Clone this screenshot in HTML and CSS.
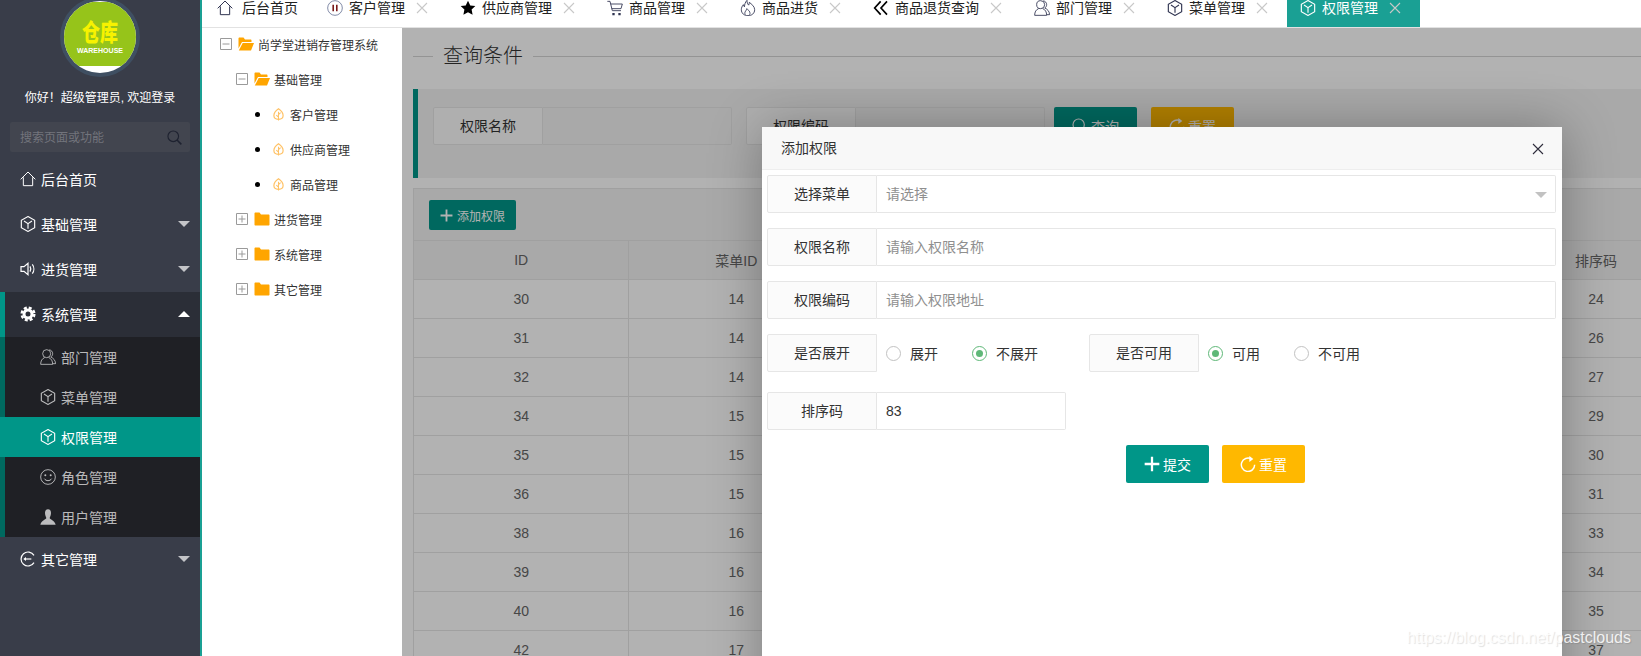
FILE: index.html
```html
<!DOCTYPE html>
<html lang="zh-CN">
<head>
  <meta charset="UTF-8" />
  <meta name="viewport" content="width=device-width, initial-scale=1.0"/>
  <title>权限管理</title>
  <link rel="stylesheet" href="styles.css">
</head>
<body>
  <!-- Icon set -->
  <svg class="sprite" xmlns="http://www.w3.org/2000/svg">
    <symbol id="i-home" viewBox="0 0 24 24"><path d="M1 12.500 12 1.500l11 11M5 9.500V22h14V9.500" fill="none" stroke="currentColor" stroke-width="1.500"/></symbol>
    <symbol id="i-cube" viewBox="0 0 24 24"><path d="M12 .8 22 6.500v11L12 23.200 2 17.500v-11z" fill="none" stroke="currentColor" stroke-width="1.700"/><path d="M6 7.500 12 11.500 18 7.500M12 11.500V19" fill="none" stroke="currentColor" stroke-width="1.700"/></symbol>
    <symbol id="i-pause" viewBox="0 0 24 24"><circle cx="12" cy="12" r="11" fill="none" stroke="#6f7a9a" stroke-width="1.300"/><path d="M9.300 7v10M14.700 7v10" stroke="#7a1a1a" stroke-width="2.400"/></symbol>
    <symbol id="i-star" viewBox="0 0 24 24"><path d="m12 1 3.400 7.200 7.600.9-5.600 5.200 1.500 7.700L12 18.300 5.100 22l1.500-7.700L1 9.100l7.600-.9z" fill="currentColor"/></symbol>
    <symbol id="i-cart" viewBox="0 0 24 24"><path d="M.5 2h4L8 16h13M5.500 6H23l-2 7H7" fill="none" stroke="currentColor" stroke-width="1.300"/><path d="M8 19.500h3.500V23H8zM17 19.500h3.500V23H17z" fill="currentColor"/></symbol>
    <symbol id="i-fire" viewBox="0 0 24 24"><path d="M12 23.500c-5.800 0-10-3.500-10-9 0-3 1.300-5.300 3-7.500.3 1.500.8 2.500 1.700 3.200C6.800 6.500 8 3 10.500.5c-.2 3.500 1 5.500 2.500 7.200.6-1.200 1-2.700 1-4.200 3 2.500 8 6 8 11 0 5.500-4.200 9-10 9z" fill="none" stroke="currentColor" stroke-width="1.300"/><path d="M8 22c-1-1.500-1.200-3.500.5-5.500.8-1 1.500-2.200 1.500-3.500 2 1.500 5.500 4 5 7.500-.2 1-.7 1.700-1.500 2.300" fill="none" stroke="currentColor" stroke-width="1.200"/></symbol>
    <symbol id="i-back" viewBox="0 0 24 24"><path d="M11.500 2 2.500 12l9 10M21 2l-9 10 9 10" fill="none" stroke="currentColor" stroke-width="2.500"/></symbol>
    <symbol id="i-users" viewBox="0 0 24 24"><circle cx="10" cy="7" r="6" fill="none" stroke="currentColor" stroke-width="1.300"/><path d="M7 12.800C3 14.500 1 18 1 23h18c0-5-2-8.500-6-10.200M14 1.200c3 .5 5 3 5 5.800 0 2-1 3.800-2.800 5 3.800 1.700 7.100 5 7.100 10h-4" fill="none" stroke="currentColor" stroke-width="1.300"/></symbol>
    <symbol id="i-sound" viewBox="0 0 24 24"><path d="M1.500 8.500v7h4.500l6 5v-17l-6 5z" fill="none" stroke="currentColor" stroke-width="1.800"/><path d="M15 8c1.500 2.500 1.500 5.500 0 8M18.500 5c3 4 3 10 0 14" fill="none" stroke="currentColor" stroke-width="1.800"/></symbol>
    <symbol id="i-gear" viewBox="0 0 24 24"><circle cx="12" cy="12" r="6" fill="none" stroke="currentColor" stroke-width="4.500"/><circle cx="12" cy="12" r="9.500" fill="none" stroke="currentColor" stroke-width="3.600" stroke-dasharray="4.460 3"/></symbol>
    <symbol id="i-smile" viewBox="0 0 24 24"><circle cx="12" cy="12" r="11" fill="none" stroke="currentColor" stroke-width="1.400"/><circle cx="8" cy="9.500" r="1.500" fill="currentColor"/><circle cx="16" cy="9.500" r="1.500" fill="currentColor"/><path d="M6.500 14.500c2.500 4 8.500 4 11 0" fill="none" stroke="currentColor" stroke-width="1.500"/></symbol>
    <symbol id="i-person" viewBox="0 0 24 24"><path d="M12 .5c3 0 4.500 2.500 4.500 5.500S15 12 14.500 13.500c0 2 7.500 3.500 9 10H.5c1.500-6.500 9-8 9-10C9 12 7.500 9 7.500 6S9 .5 12 .5z" fill="currentColor"/></symbol>
    <symbol id="i-exit" viewBox="0 0 24 24"><path d="M21 6.500a10.500 10.500 0 1 0 0 11" fill="none" stroke="currentColor" stroke-width="1.800"/><path d="M7 12h10" stroke="currentColor" stroke-width="1.800"/><path d="m5 12 4-3v6z" fill="currentColor"/></symbol>
    <symbol id="i-search" viewBox="0 0 24 24"><circle cx="10" cy="10" r="8.500" fill="none" stroke="currentColor" stroke-width="1.800"/><path d="m16 16 7 7" stroke="currentColor" stroke-width="2.400"/></symbol>
    <symbol id="i-plus" viewBox="0 0 24 24"><path d="M12 1v22M1 12h22" stroke="currentColor" stroke-width="3.400"/></symbol>
    <symbol id="i-refresh" viewBox="0 0 24 24"><path d="M17 4.500A10 10 0 1 0 22 13" fill="none" stroke="currentColor" stroke-width="2.200"/><path d="m14 0 6 4.500-6 4.500z" fill="currentColor"/></symbol>
    <symbol id="i-close" viewBox="0 0 12 12"><path d="m1 1 10 10M11 1 1 11" stroke="currentColor" stroke-width="1.100"/></symbol>
    <symbol id="i-leaf" viewBox="0 0 24 24"><path d="M12 1.500C5.500 6 3.500 10 3.500 14c0 4.500 3.500 7 8.500 7s8.500-2.500 8.500-7c0-4-2-8-8.500-12.500z" fill="none" stroke="currentColor" stroke-width="2.200"/><path d="M12 7v16M12 12l4-3.500M12 17l-4-4" fill="none" stroke="currentColor" stroke-width="1.900"/></symbol>
    <symbol id="i-folder" viewBox="0 0 16 14"><path d="M.5 1.500C.5.800 1 .5 1.500.5h4L7 2.500h7.500c.6 0 1 .4 1 1v9c0 .6-.4 1-1 1h-13c-.6 0-1-.4-1-1z" fill="currentColor"/></symbol>
    <symbol id="i-folder-open" viewBox="0 0 16 14"><path d="M.5 1.500C.5.800 1 .5 1.500.5h4L7 2.500h5.500c.6 0 1 .4 1 1V5H4L.5 11.500z" fill="currentColor"/><path d="M4.700 6H16l-3 7.500H.8z" fill="currentColor"/></symbol>
    <symbol id="i-minus-box" viewBox="0 0 12 12"><path d="M.5.500h11v11H.5z" fill="#fff" stroke="#9a9a9a"/><path d="M2.500 6h7" stroke="#9a9a9a"/></symbol>
    <symbol id="i-plus-box" viewBox="0 0 12 12"><path d="M.5.500h11v11H.5z" fill="#fff" stroke="#9a9a9a"/><path d="M2.500 6h7M6 2.500v7" stroke="#9a9a9a"/></symbol>
  </svg>

  <div class="app">
    <!-- Left menu -->
    <aside class="side">
      <svg class="logo" viewBox="0 0 80 80" xmlns="http://www.w3.org/2000/svg" aria-label="仓库">
        <defs><clipPath id="logo-clip"><circle cx="40" cy="40" r="36"/></clipPath></defs>
        <circle cx="40" cy="40" r="40" fill="#3f4f62"/>
        <g clip-path="url(#logo-clip)">
          <rect width="80" height="80" fill="#fff"/>
          <rect y="5" width="80" height="64" fill="#96c41a"/>
        </g>
        <text class="logo-cn" transform="translate(40 44) scale(1 1.3)">仓库</text>
        <text class="logo-en" x="17" y="56" textLength="46" lengthAdjust="spacingAndGlyphs">WAREHOUSE</text>
      </svg>
      <div class="greet">你好！超级管理员, 欢迎登录</div>
      <div class="side-search">
        <span>搜索页面或功能</span>
        <svg class="side-search-icon"><use href="#i-search"/></svg>
      </div>

      <nav class="menu">
        <a class="menu-item"><svg class="ico"><use href="#i-home"/></svg>后台首页</a>
        <a class="menu-item"><svg class="ico"><use href="#i-cube"/></svg>基础管理<i class="caret"></i></a>
        <a class="menu-item"><svg class="ico"><use href="#i-sound"/></svg>进货管理<i class="caret"></i></a>
        <a class="menu-item open"><svg class="ico"><use href="#i-gear"/></svg>系统管理<i class="caret up"></i></a>
        <div class="submenu">
          <a class="sub-item"><svg class="ico"><use href="#i-users"/></svg>部门管理</a>
          <a class="sub-item"><svg class="ico"><use href="#i-cube"/></svg>菜单管理</a>
          <a class="sub-item active"><svg class="ico"><use href="#i-cube"/></svg>权限管理</a>
          <a class="sub-item"><svg class="ico"><use href="#i-smile"/></svg>角色管理</a>
          <a class="sub-item"><svg class="ico"><use href="#i-person"/></svg>用户管理</a>
        </div>
        <a class="menu-item"><svg class="ico"><use href="#i-exit"/></svg>其它管理<i class="caret"></i></a>
      </nav>
    </aside>

    <div class="content">
      <!-- Tabs -->
      <div class="tabs">
        <div class="tab tab-home"><svg class="tab-ico"><use href="#i-home"/></svg>后台首页</div>
        <div class="tab"><svg class="tab-ico"><use href="#i-pause"/></svg>客户管理<svg class="tab-close"><use href="#i-close"/></svg></div>
        <div class="tab"><svg class="tab-ico"><use href="#i-star"/></svg>供应商管理<svg class="tab-close"><use href="#i-close"/></svg></div>
        <div class="tab"><svg class="tab-ico"><use href="#i-cart"/></svg>商品管理<svg class="tab-close"><use href="#i-close"/></svg></div>
        <div class="tab"><svg class="tab-ico"><use href="#i-fire"/></svg>商品进货<svg class="tab-close"><use href="#i-close"/></svg></div>
        <div class="tab"><svg class="tab-ico"><use href="#i-back"/></svg>商品退货查询<svg class="tab-close"><use href="#i-close"/></svg></div>
        <div class="tab"><svg class="tab-ico"><use href="#i-users"/></svg>部门管理<svg class="tab-close"><use href="#i-close"/></svg></div>
        <div class="tab"><svg class="tab-ico"><use href="#i-cube"/></svg>菜单管理<svg class="tab-close"><use href="#i-close"/></svg></div>
        <div class="tab active"><svg class="tab-ico"><use href="#i-cube"/></svg>权限管理<svg class="tab-close"><use href="#i-close"/></svg></div>
      </div>

      <div class="panes">
        <!-- Menu tree -->
        <div class="tree">
          <div class="tree-row lv1"><svg class="tree-box"><use href="#i-minus-box"/></svg><svg class="tree-folder"><use href="#i-folder-open"/></svg>尚学堂进销存管理系统</div>
          <div class="tree-row lv2"><svg class="tree-box"><use href="#i-minus-box"/></svg><svg class="tree-folder"><use href="#i-folder-open"/></svg>基础管理</div>
          <div class="tree-row lv3"><i class="tree-dot"></i><svg class="tree-leaf"><use href="#i-leaf"/></svg>客户管理</div>
          <div class="tree-row lv3"><i class="tree-dot"></i><svg class="tree-leaf"><use href="#i-leaf"/></svg>供应商管理</div>
          <div class="tree-row lv3"><i class="tree-dot"></i><svg class="tree-leaf"><use href="#i-leaf"/></svg>商品管理</div>
          <div class="tree-row lv2"><svg class="tree-box"><use href="#i-plus-box"/></svg><svg class="tree-folder"><use href="#i-folder"/></svg>进货管理</div>
          <div class="tree-row lv2"><svg class="tree-box"><use href="#i-plus-box"/></svg><svg class="tree-folder"><use href="#i-folder"/></svg>系统管理</div>
          <div class="tree-row lv2"><svg class="tree-box"><use href="#i-plus-box"/></svg><svg class="tree-folder"><use href="#i-folder"/></svg>其它管理</div>
        </div>

        <div class="main">
          <fieldset class="field-title"><legend>查询条件</legend></fieldset>

          <div class="quote">
            <div class="query-item">
              <label class="form-label">权限名称</label>
              <div class="form-input"></div>
            </div>
            <div class="query-item">
              <label class="form-label">权限编码</label>
              <div class="form-input"></div>
            </div>
            <button class="btn btn-teal"><svg class="btn-ico"><use href="#i-search"/></svg>查询</button>
            <button class="btn btn-yellow"><svg class="btn-ico"><use href="#i-refresh"/></svg>重置</button>
          </div>

          <div class="table-card">
            <div class="table-tool">
              <button class="btn btn-teal btn-sm"><svg class="btn-ico-sm"><use href="#i-plus"/></svg>添加权限</button>
            </div>
            <table class="grid">
              <thead>
                <tr><th>ID</th><th>菜单ID</th><th></th><th></th><th></th><th>排序码</th></tr>
              </thead>
              <tbody>
                <tr><td>30</td><td>14</td><td></td><td></td><td></td><td>24</td></tr>
                <tr><td>31</td><td>14</td><td></td><td></td><td></td><td>26</td></tr>
                <tr><td>32</td><td>14</td><td></td><td></td><td></td><td>27</td></tr>
                <tr><td>34</td><td>15</td><td></td><td></td><td></td><td>29</td></tr>
                <tr><td>35</td><td>15</td><td></td><td></td><td></td><td>30</td></tr>
                <tr><td>36</td><td>15</td><td></td><td></td><td></td><td>31</td></tr>
                <tr><td>38</td><td>16</td><td></td><td></td><td></td><td>33</td></tr>
                <tr><td>39</td><td>16</td><td></td><td></td><td></td><td>34</td></tr>
                <tr><td>40</td><td>16</td><td></td><td></td><td></td><td>35</td></tr>
                <tr><td>42</td><td>17</td><td></td><td></td><td></td><td>37</td></tr>
              </tbody>
            </table>
          </div>

          <div class="shade"></div>

          <!-- Dialog -->
          <div class="dialog">
            <div class="dialog-title">添加权限<svg class="dialog-close"><use href="#i-close"/></svg></div>
            <form class="dialog-form">
              <div class="form-row">
                <label class="form-label">选择菜单</label>
                <div class="form-input placeholder">请选择<i class="select-caret"></i></div>
              </div>
              <div class="form-row">
                <label class="form-label">权限名称</label>
                <div class="form-input placeholder">请输入权限名称</div>
              </div>
              <div class="form-row">
                <label class="form-label">权限编码</label>
                <div class="form-input placeholder">请输入权限地址</div>
              </div>
              <div class="form-row form-row-radio">
                <div class="radio-group">
                  <label class="form-label">是否展开</label>
                  <span class="radio"><i class="radio-ring"></i>展开</span>
                  <span class="radio on"><i class="radio-ring"></i>不展开</span>
                </div>
                <div class="radio-group">
                  <label class="form-label">是否可用</label>
                  <span class="radio on"><i class="radio-ring"></i>可用</span>
                  <span class="radio"><i class="radio-ring"></i>不可用</span>
                </div>
              </div>
              <div class="form-row form-row-short">
                <label class="form-label">排序码</label>
                <div class="form-input">83</div>
              </div>
              <div class="form-actions">
                <button class="btn btn-teal" type="button"><svg class="btn-ico"><use href="#i-plus"/></svg>提交</button>
                <button class="btn btn-yellow" type="button"><svg class="btn-ico"><use href="#i-refresh"/></svg>重置</button>
              </div>
            </form>
          </div>

          <div class="watermark">https://blog.csdn.net/pastclouds</div>
        </div>
      </div>
    </div>
  </div>
</body>
</html>
```

FILE: styles.css
```css
* {
  margin: 0;
  padding: 0;
  box-sizing: border-box;
}

html, body {
  height: 656px;
  overflow: hidden;
}

body {
  font-family: "Liberation Sans", "Noto Sans CJK SC", sans-serif;
  font-size: 14px;
  color: #333;
  background: #fff;
}

.sprite {
  display: none;
}

.app {
  display: flex;
  height: 656px;
}

/* left menu */
.side {
  flex: none;
  width: 202px;
  background: #393d49;
  border-right: 2px solid #1aa094;
  color: #fff;
}

.logo {
  display: block;
  width: 80px;
  height: 80px;
  margin: -3px auto 0;
}

.logo-cn {
  font-size: 18px;
  font-weight: 900;
  fill: #f7f200;
  text-anchor: middle;
}

.logo-en {
  font-size: 7px;
  font-weight: 700;
  fill: #fff;
}

.greet {
  height: 18px;
  margin-top: 12px;
  font-size: 12px;
  line-height: 18px;
  text-align: center;
}

.side-search {
  display: flex;
  align-items: center;
  justify-content: space-between;
  height: 30px;
  margin: 15px 10px 5px;
  padding: 0 8px 2px 10px;
  background: #42454f;
  border-radius: 2px;
  color: #72747c;
  font-size: 12px;
}

.side-search-icon {
  width: 15px;
  height: 15px;
  margin-top: 2px;
  color: #1e2230;
}

.menu-item {
  display: flex;
  align-items: center;
  height: 45px;
  padding: 0 0 2px 20px;
  position: relative;
}

.menu-item.open {
  padding-left: 15px;
  background: #2b2e37;
  border-left: 5px solid #009688;
}

.ico {
  flex: none;
  width: 16px;
  height: 16px;
  margin-right: 5px;
}

.caret {
  position: absolute;
  right: 10px;
  top: 19px;
  border-style: solid;
  border-width: 6px 6px 0;
  border-color: rgba(255, 255, 255, 0.7) transparent transparent;
}

.caret.up {
  border-width: 0 6px 6px;
  border-color: transparent transparent #fff;
}

.submenu {
  background: #1f2025;
}

.sub-item {
  display: flex;
  align-items: center;
  height: 40px;
  padding-left: 35px;
  border-left: 5px solid #00695f;
  color: rgba(255, 255, 255, 0.7);
}

.sub-item.active {
  background: #009688;
  border-left-color: #009688;
  color: #fff;
}

/* tabs */
.content {
  flex: 1;
  display: flex;
  flex-direction: column;
  min-width: 0;
}

.tabs {
  flex: none;
  display: flex;
  height: 28px;
  border-bottom: 1px solid #e2e2e2;
  color: #222;
  line-height: 16px;
}

.tab {
  display: flex;
  align-items: flex-start;
  height: 27px;
  padding: 0 19px 0 13px;
}

.tab-home {
  padding: 0 16px 0 15px;
}

.tab-home .tab-ico {
  margin-right: 9px;
}

.tab.active {
  background: #1aa094;
  color: #fff;
}

.tab-ico {
  flex: none;
  width: 16px;
  height: 16px;
  margin-right: 6px;
  color: #2f3350;
}

.tab:nth-child(3) .tab-ico, .tab:nth-child(6) .tab-ico {
  color: #000;
}

.tab.active .tab-ico {
  color: #fff;
}

.tab-close {
  flex: none;
  width: 12px;
  height: 12px;
  margin: 2px 0 0 11px;
  color: #c8c8c8;
}

/* tree */
.panes {
  flex: 1;
  display: flex;
  min-height: 0;
}

.tree {
  flex: none;
  width: 200px;
  font-size: 12px;
  color: #333;
}

.tree-row {
  display: flex;
  align-items: center;
  height: 35px;
  padding-bottom: 2px;
}

.lv1 {
  padding-left: 18px;
}

.lv2 {
  padding-left: 34px;
}

.lv3 {
  padding-left: 53px;
}

.tree-box {
  flex: none;
  width: 12px;
  height: 12px;
  margin: -1px 6px 0 0;
}

.tree-folder {
  flex: none;
  width: 16px;
  height: 14px;
  margin: -1px 4px 0 0;
  color: #ffa500;
}

.tree-dot {
  flex: none;
  width: 5px;
  height: 5px;
  margin: -1px 12px 0 0;
  background: #000;
  border-radius: 50%;
}

.tree-leaf {
  flex: none;
  width: 13px;
  height: 15px;
  margin: -1px 5px 0 0;
  color: #ffc266;
}

/* main panel */
.main {
  flex: 1;
  position: relative;
  min-width: 0;
  overflow: hidden;
  padding: 13px 0 0 11px;
}

.field-title {
  height: 30px;
  margin-bottom: 18px;
  border: 0;
  border-top: 1px solid #d4d4d4;
}

.field-title legend {
  margin-left: 20px;
  padding: 0 10px;
  font-size: 20px;
  font-weight: 300;
  line-height: 30px;
}

.quote {
  display: flex;
  align-items: flex-start;
  height: 89px;
  padding: 18px 0 0 15px;
  background: #f2f2f2;
  border-left: 5px solid #009688;
}

.query-item {
  display: flex;
  width: 299px;
  margin-right: 14px;
}

.query-item + .query-item {
  margin-right: 9px;
}

.form-label {
  flex: none;
  width: 110px;
  height: 38px;
  background: #fbfbfb;
  border: 1px solid #e6e6e6;
  border-radius: 2px 0 0 2px;
  line-height: 36px;
  text-align: center;
}

.form-input {
  flex: 1;
  height: 38px;
  position: relative;
  padding-left: 9px;
  background: #fff;
  border: 1px solid #e6e6e6;
  border-left: 0;
  border-radius: 0 2px 2px 0;
  line-height: 36px;
}

.quote .form-input {
  background: #f2f2f2;
}

.placeholder {
  color: #8f8f8f;
}

.btn {
  display: inline-flex;
  align-items: center;
  justify-content: center;
  flex: none;
  width: 83px;
  height: 38px;
  border: 0;
  border-radius: 2px;
  color: #fff;
  font: inherit;
}

.btn-teal {
  background: #009688;
}

.btn-yellow {
  background: #ffb800;
  margin-left: 14px;
}

.btn-sm {
  width: 87px;
  height: 30px;
  font-size: 12px;
}

.btn-ico {
  width: 16px;
  height: 16px;
  margin-right: 3px;
}

.btn-ico-sm {
  width: 13px;
  height: 13px;
  margin-right: 4px;
}

.table-card {
  width: 1292px;
  margin-top: 10px;
  border: 1px solid #e6e6e6;
  border-bottom: 0;
}

.table-tool {
  height: 52px;
  padding: 11px 0 0 15px;
  background: #f2f2f2;
  border-bottom: 1px solid #e6e6e6;
}

.grid {
  width: 100%;
  table-layout: fixed;
  border-collapse: collapse;
  color: #666;
}

.grid th, .grid td {
  height: 39px;
  border: 1px solid #e6e6e6;
  border-top: 0;
  font-weight: 400;
  text-align: center;
}

.grid th:first-child, .grid td:first-child {
  border-left: 0;
}

.grid th {
  height: 38px;
  background: #f2f2f2;
}

/* dialog and its shade */
.shade {
  position: absolute;
  top: 0;
  left: 0;
  right: 0;
  bottom: 0;
  background: rgba(0, 0, 0, 0.3);
}

.dialog {
  position: absolute;
  top: 99px;
  left: 360px;
  width: 800px;
  height: 620px;
  background: #fff;
  box-shadow: 1px 1px 50px rgba(0, 0, 0, 0.3);
}

.dialog-title {
  position: relative;
  height: 43px;
  padding-left: 19px;
  background: #f8f8f8;
  border-bottom: 1px solid #eee;
  line-height: 42px;
  color: #333;
}

.dialog-close {
  position: absolute;
  top: 16px;
  right: 18px;
  width: 12px;
  height: 12px;
  color: #2e2d3c;
}

.dialog-form {
  padding: 5px 6px 0 5px;
}

.form-row {
  display: flex;
  margin-bottom: 15px;
}

.form-row-radio {
  margin-bottom: 20px;
}

.form-row-short {
  width: 299px;
}

.select-caret {
  position: absolute;
  top: 16px;
  right: 8px;
  border-style: solid;
  border-width: 6px 6px 0;
  border-color: #c2c2c2 transparent transparent;
}

.radio-group {
  display: flex;
  align-items: center;
  width: 322px;
}

.radio {
  display: flex;
  align-items: center;
  width: 86px;
  color: #333;
}

.radio-group .form-label + .radio {
  margin-left: 9px;
}

.radio-ring {
  display: flex;
  align-items: center;
  justify-content: center;
  width: 15px;
  height: 15px;
  margin-right: 9px;
  border: 1px solid #c2c2c2;
  border-radius: 50%;
}

.radio.on .radio-ring {
  border-color: #5fb878;
}

.radio.on .radio-ring::after {
  content: "";
  width: 7px;
  height: 7px;
  background: #5fb878;
  border-radius: 50%;
}

.form-actions {
  display: flex;
  padding-left: 359px;
}

.form-actions .btn-yellow {
  margin-left: 13px;
}

.watermark {
  position: absolute;
  right: 10px;
  bottom: 9px;
  color: rgba(255, 255, 255, 0.85);
  font-size: 16px;
  text-shadow: 1px 1px 1px rgba(0, 0, 0, 0.12);
}
```
